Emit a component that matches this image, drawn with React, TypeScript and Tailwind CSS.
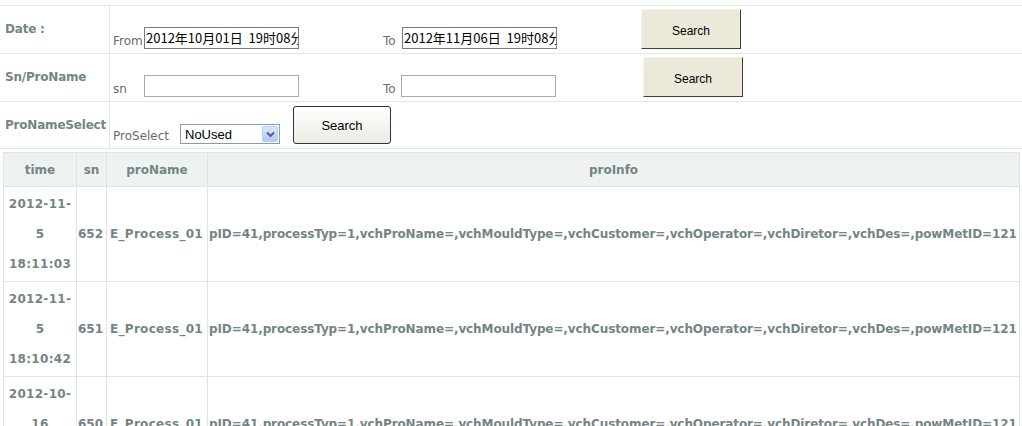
import React from "react";

const lbl = "font-['DejaVu_Sans',sans-serif] text-[12px] font-bold text-[#738585]";
const small = "font-['DejaVu_Sans',sans-serif] text-[12px] text-[#6a6a6a] leading-[15px]";
const cjk = "font-['Noto_Sans_CJK_SC','Noto_Sans',sans-serif]";

function XpButton({ w, h, ml }: { w: string; h: string; ml: string }) {
  return (
    <div
      className={`${w} ${h} ${ml} flex items-center justify-center pt-[3px] bg-[#ece9d8] border-t border-l border-[#f4f3ee] border-r border-b border-r-[#404040] border-b-[#404040] font-['Liberation_Sans',Arial,sans-serif] text-[12px] text-black`}
    >
      Search
    </div>
  );
}

function Row({ label, h, children }: { label: string; h: string; children: React.ReactNode }) {
  return (
    <div className={`flex ${h} border-b border-[#e3e6e6]`}>
      <div className="w-[110px] shrink-0 border-r border-[#e3e6e6] flex items-center pl-[5px] pb-[1px]">
        <span className={`${lbl} tracking-[-0.2px]`}>{label}</span>
      </div>
      <div className="flex items-end pb-[4px] pl-[3px]">{children}</div>
    </div>
  );
}

const rows = [
  { d1: "2012-11-", d2: "5", d3: "18:11:03", sn: "652" },
  { d1: "2012-11-", d2: "5", d3: "18:10:42", sn: "651" },
  { d1: "2012-10-", d2: "16", d3: "16:02:11", sn: "650" },
];

const info =
  "pID=41,processTyp=1,vchProName=,vchMouldType=,vchCustomer=,vchOperator=,vchDiretor=,vchDes=,powMetID=121";

export default function App() {
  return (
    <div className="w-[1022px] h-[426px] overflow-hidden bg-white pt-[5px]">
      <div className="border-t border-[#e3e6e6]">
        <Row label="Date :" h="h-[48px]">
          <span className={`${small} w-[31px]`}>From</span>
          <div className={`w-[155px] h-[22px] border border-[#7c7c7c] overflow-hidden whitespace-nowrap pl-[1px] text-[13px] leading-[20px] text-black ${cjk}`}>
            2012年10月01日&nbsp;&nbsp;19时08分
          </div>
          <span className={`${small} w-[19px] ml-[84px]`}>To</span>
          <div className={`w-[155px] h-[22px] border border-[#7c7c7c] overflow-hidden whitespace-nowrap pl-[1px] text-[13px] leading-[20px] text-black ${cjk}`}>
            2012年11月06日&nbsp;&nbsp;19时08分
          </div>
          <XpButton w="w-[100px]" h="h-[40px]" ml="ml-[84px]" />
        </Row>
        <Row label="Sn/ProName" h="h-[48px]">
          <span className={`${small} w-[31px]`}>sn</span>
          <div className="w-[155px] h-[22px] border border-[#a5acb2]" />
          <span className={`${small} w-[18px] ml-[84px]`}>To</span>
          <div className="w-[155px] h-[22px] border border-[#a5acb2]" />
          <XpButton w="w-[100px]" h="h-[40px]" ml="ml-[87px]" />
        </Row>
        <Row label="ProNameSelect" h="h-[47px]">
          <span className={`${small} w-[67px]`}>ProSelect</span>
          <div className="w-[100px] h-[20px] border border-[#7f9db9] flex items-center justify-between pl-[4px] pr-[1px]">
            <span className="font-['Liberation_Sans',Arial,sans-serif] text-[13px] text-black leading-none">NoUsed</span>
            <div className="w-[16px] h-[16px] rounded-[2px] border border-[#b9cdf6] bg-gradient-to-b from-[#dce6fd] to-[#b5c8f5] flex items-center justify-center">
              <svg width="9" height="7" viewBox="0 0 9 7">
                <path d="M1 1.5 L4.5 5 L8 1.5" fill="none" stroke="#4d6185" strokeWidth="2" />
              </svg>
            </div>
          </div>
          <div className="w-[98px] h-[38px] ml-[13px] pt-[2px] rounded-[3px] border border-[#2c3440] bg-gradient-to-b from-[#ffffff] to-[#ecebe3] flex items-center justify-center font-['Liberation_Sans',Arial,sans-serif] text-[13px] text-black">
            Search
          </div>
        </Row>
      </div>

      <div className="mt-[3px] ml-[3px] w-[1017px] bg-[#dfe5e4] p-px grid grid-cols-[72px_29px_100px_811px] gap-px">
        <div className={`${lbl} h-[33px] bg-[#eef3f2] flex items-center justify-center`}>time</div>
        <div className={`${lbl} h-[33px] bg-[#eef3f2] flex items-center justify-center`}>sn</div>
        <div className={`${lbl} h-[33px] bg-[#eef3f2] flex items-center justify-center`}>proName</div>
        <div className={`${lbl} h-[33px] bg-[#eef3f2] flex items-center justify-center`}>proInfo</div>
        {rows.map((r) => (
          <React.Fragment key={r.sn}>
            <div className={`${lbl} h-[94px] bg-white flex flex-col items-center justify-center leading-[30px] tracking-[0.3px]`}>
              <span>{r.d1}</span>
              <span>{r.d2}</span>
              <span>{r.d3}</span>
            </div>
            <div className={`${lbl} h-[94px] bg-white flex items-center pl-[1px] whitespace-nowrap`}>{r.sn}</div>
            <div className={`${lbl} h-[94px] bg-white flex items-center pl-[3px] whitespace-nowrap tracking-[0.3px]`}>E_Process_01</div>
            <div className={`${lbl} h-[94px] bg-white flex items-center pl-[1px] whitespace-nowrap overflow-hidden tracking-[-0.1px]`}>{info}</div>
          </React.Fragment>
        ))}
      </div>
    </div>
  );
}
